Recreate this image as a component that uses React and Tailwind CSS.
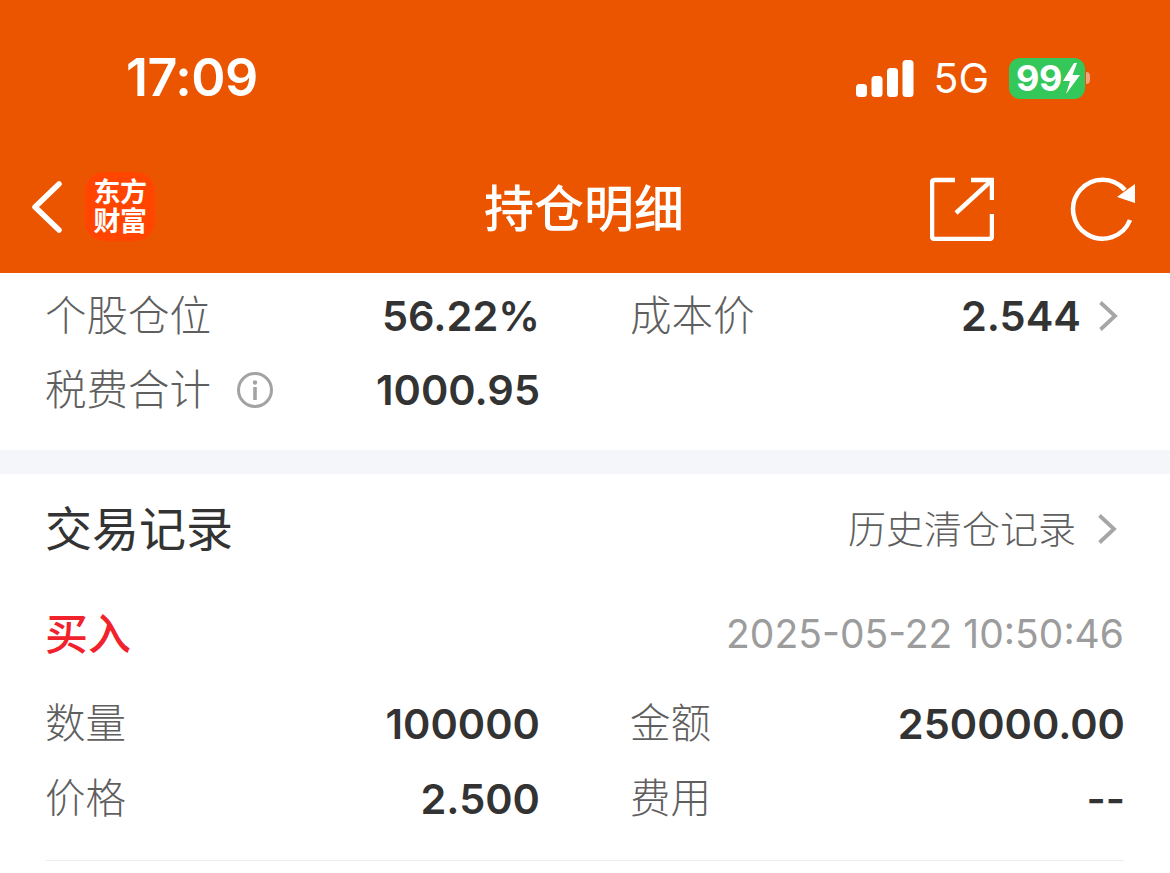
const cjk = { fontFamily: '"Inter","Noto Sans CJK SC",sans-serif' };

function Chevron() {
  return (
    <svg width="20" height="32" viewBox="0 0 20 32" className="block">
      <path d="M2.5 2.5 L17 16 L2.5 29.5" fill="none" stroke="#a6a6a6" strokeWidth="3.8" />
    </svg>
  );
}

function Cell({ label, value, icon, chevron, small }) {
  return (
    <div className="flex items-center justify-between">
      <div className={small ? "flex items-center -ml-[1px] text-[40.5px] leading-[56px] font-light text-[#5f5f5f]" : "flex items-center -ml-[1px] text-[41.500px] leading-[56px] font-light text-[#5f5f5f]"}>
        <span>{label}</span>
        {icon}
      </div>
      <div className="flex items-center">
        <span className="text-[41.500px] leading-[56px] font-semibold text-[#333333] -mr-[1px]">{value}</span>
        {chevron && <span className="ml-[18px] -mr-[-6px]"><Chevron /></span>}
      </div>
    </div>
  );
}

export default function App() {
  return (
    <div className="w-[1170px] h-[873px] overflow-hidden bg-white" style={cjk}>
      <header className="h-[273px] bg-[#eb5500] text-white flex flex-col">
        <div className="h-[156px] pl-[126px] pr-[80px] pt-[46px] flex items-start justify-between">
          <div className="text-[52px] leading-[64px] font-semibold tracking-[-0.5px]">17:09</div>
          <div className="flex items-center h-[64px]">
            <svg width="58" height="38" viewBox="0 0 58 38" className="block">
              <rect x="0" y="25" width="11" height="13" rx="3.5" fill="#fff" />
              <rect x="15.500" y="17" width="11" height="21" rx="3.5" fill="#fff" />
              <rect x="31" y="9" width="11" height="29" rx="3.5" fill="#fff" />
              <rect x="46.500" y="1" width="11" height="37" rx="3.5" fill="#fff" />
            </svg>
            <span className="ml-[19px] text-[41px] leading-[64px] font-normal">5G</span>
            <div className="ml-[20px] w-[76px] h-[41px] rounded-[11px] bg-[#34c759] flex items-center justify-start pl-[7px] text-[36px] leading-[41px] font-bold tracking-[-0.5px]">
              99
              <svg width="19" height="31" viewBox="0 0 19 31" className="block">
                <path d="M12 0 L1 18 H8 L4 31 L18 12 H10.500 L15 0 Z" fill="#fff" />
              </svg>
            </div>
            <div className="ml-[1px] w-[4px] h-[12px] rounded-r-[4px] bg-[#f3a47f]" />
          </div>
        </div>
        <div className="flex-1 pl-[31px] pr-[34px] grid grid-cols-[1fr_auto_1fr] items-center -mt-[12px]">
          <div className="flex items-center">
            <svg width="32" height="54" viewBox="0 0 32 54" className="block -mt-[3px]">
              <path d="M28 4 L4 27 L28 50" fill="none" stroke="#fff" strokeWidth="5.500" strokeLinecap="round" strokeLinejoin="round" />
            </svg>
            <div className="ml-[22px] -mt-[4px] w-[70px] h-[69px] rounded-[20px] bg-[#ff4500] flex flex-col items-center justify-center text-[27px] leading-[29px] font-bold tracking-[-0.5px]">
              <span>东方</span>
              <span>财富</span>
            </div>
          </div>
          <div className="text-center text-[50px] leading-[64px] font-medium ml-[1px]">持仓明细</div>
          <div className="flex items-center justify-end">
            <svg width="64" height="64" viewBox="0 0 64 64" className="block mr-[76px]" fill="none" stroke="#fff" strokeWidth="4.500">
              <path d="M25 3 H5 Q2 3 2 6 V59 Q2 62 5 62 H59 Q62 62 62 59 V37" />
              <path d="M41 3 H62 V23" />
              <path d="M26 36 L61 4" />
            </svg>
            <svg width="66" height="66" viewBox="0 0 66 66" className="block" fill="none">
              <path d="M60 44 A29.500 29.500 0 1 1 55 14" stroke="#fff" strokeWidth="4.500" />
              <path d="M65 8 V27 L47 21 Z" fill="#fff" />
            </svg>
          </div>
        </div>
      </header>

      <section className="px-[46px] pt-[15px] h-[177px]">
        <div className="grid grid-cols-[493px_493px] gap-x-[92px] gap-y-[18px]">
          <Cell label="个股仓位" value="56.22%" />
          <Cell label="成本价" value="2.544" chevron />
          <Cell
            label="税费合计"
            value="1000.95"
            icon={
              <svg width="36" height="36" viewBox="0 0 36 36" className="block ml-[26px]">
                <circle cx="18" cy="18" r="16.500" fill="none" stroke="#a3a3a3" strokeWidth="3" />
                <circle cx="18" cy="10.500" r="2.200" fill="#a3a3a3" />
                <rect x="16.200" y="15" width="3.600" height="13" fill="#a3a3a3" />
              </svg>
            }
          />
        </div>
      </section>

      <div className="h-[24px] bg-[#f5f6fa]" />

      <section className="px-[46px]">
        <div className="flex items-center justify-between h-[110px]">
          <h2 className="text-[47px] leading-[60px] font-normal text-[#333333] -ml-[1px]">交易记录</h2>
          <div className="flex items-center -mr-[-7px]">
            <span className="text-[38px] leading-[52px] font-light text-[#5f5f5f] -mr-[1px]">历史清仓记录</span>
            <span className="ml-[22px]"><Chevron /></span>
          </div>
        </div>
        <div className="flex items-center justify-between h-[100px]">
          <span className="text-[43px] leading-[56px] font-medium text-[#f0222c] -ml-[1px]">买入</span>
          <span className="text-[39px] leading-[52px] font-normal text-[#9c9c9c]">2025-05-22 10:50:46</span>
        </div>
        <div className="mt-[12px] grid grid-cols-[493px_493px] gap-x-[92px] gap-y-[19px]">
          <Cell small label="数量" value="100000" />
          <Cell small label="金额" value="250000.00" />
          <Cell small label="价格" value="2.500" />
          <Cell small label="费用" value="--" />
        </div>
        <div className="mt-[33px] h-[1px] bg-[#ececec]" />
      </section>
    </div>
  );
}
